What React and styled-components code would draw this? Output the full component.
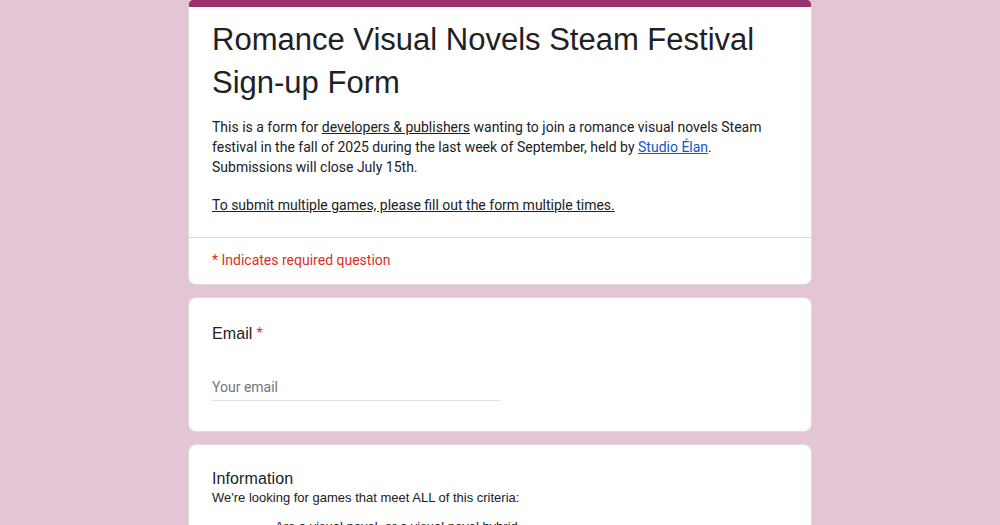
import React from "react";
import styled, { createGlobalStyle } from "styled-components";

const GlobalStyle = createGlobalStyle`
  html, body {
    margin: 0;
    padding: 0;
    background: #e3c5d6;
    height: 525px;
    overflow: hidden;
  }
`;

const Page = styled.div`
  display: flex;
  flex-direction: column;
  align-items: center;
  gap: 12px;
  padding-bottom: 40px;
`;

const Card = styled.div`
  width: 624px;
  box-sizing: border-box;
  background: #fff;
  border: 1px solid #dadce0;
  border-radius: 8px;
  overflow: hidden;
  ${({ $accent }) =>
    $accent &&
    `
    border-top: 8px solid #9b3370;
    margin-top: -1px;
  `}
`;

const HeaderBody = styled.div`
  padding: 11px 23px 22px;
`;

const Title = styled.h1`
  margin: 0 0 13px;
  font-family: "Liberation Sans", Arial, sans-serif;
  font-size: 31px;
  font-weight: 400;
  line-height: 43px;
  color: #202124;
`;

const Description = styled.div`
  font-family: Roboto, "Liberation Sans", sans-serif;
  font-size: 14px;
  line-height: 20px;
  color: #202124;
`;

const Gap = styled.div`
  height: 18px;
`;

const Underlined = styled.span`
  text-decoration: underline;
`;

const Anchor = styled.a`
  color: #1155cc;
  text-decoration: underline;
`;

const Divider = styled.div`
  height: 1px;
  background: #dadce0;
`;

const RequiredNote = styled.div`
  padding: 12px 23px 14px;
  font-family: Roboto, "Liberation Sans", sans-serif;
  font-size: 14px;
  line-height: 20px;
  color: #d93025;
`;

const Question = styled.div`
  padding: ${({ $top }) => $top}px 23px ${({ $bottom }) => $bottom}px;
`;

const QuestionTitle = styled.div`
  font-family: "Liberation Sans", Arial, sans-serif;
  font-size: 16px;
  line-height: 24px;
  color: #202124;
  letter-spacing: 0.1px;
`;

const Star = styled.span`
  color: #d93025;
  margin-left: 4px;
`;

const InputWrap = styled.div`
  width: 50%;
  margin-top: 28px;
  border-bottom: 1px solid #e0e0e0;
`;

const TextInput = styled.input`
  display: block;
  width: 100%;
  box-sizing: border-box;
  border: none;
  outline: none;
  padding: 0;
  height: 26px;
  background: transparent;
  font-family: Roboto, "Liberation Sans", sans-serif;
  font-size: 14px;
  color: #202124;
  &::placeholder {
    color: #70757a;
  }
`;

const SectionText = styled.div`
  margin-top: -1px;
  font-family: "Liberation Sans", Arial, sans-serif;
  font-size: 13px;
  line-height: 16px;
  color: #202124;
`;

const Criteria = styled.ul`
  margin: 12px 0 0;
  padding-left: 63px;
  font-family: "Liberation Sans", Arial, sans-serif;
  font-size: 13px;
  line-height: 18px;
  color: #202124;
`;

export default function App() {
  return (
    <>
      <GlobalStyle />
      <Page>
        <Card $accent>
          <HeaderBody>
            <Title>Romance Visual Novels Steam Festival Sign-up Form</Title>
            <Description>
              This is a form for <Underlined>developers &amp; publishers</Underlined>{" "}
              wanting to join a romance visual novels Steam festival in the fall of
              2025 during the last week of September, held by{" "}
              <Anchor href="#">Studio Élan</Anchor>. Submissions will close July 15th.
              <Gap />
              <Underlined>To submit multiple games, please fill out the form multiple times.</Underlined>
            </Description>
          </HeaderBody>
          <Divider />
          <RequiredNote>* Indicates required question</RequiredNote>
        </Card>

        <Card>
          <Question $top={24} $bottom={30}>
            <QuestionTitle>
              Email<Star>*</Star>
            </QuestionTitle>
            <InputWrap>
              <TextInput type="email" placeholder="Your email" />
            </InputWrap>
          </Question>
        </Card>

        <Card>
          <Question $top={22} $bottom={24}>
            <QuestionTitle>Information</QuestionTitle>
            <SectionText>We're looking for games that meet ALL of this criteria:</SectionText>
            <Criteria>
              <li>Are a visual novel, or a visual novel hybrid</li>
              <li>Have romance as a core part of the story</li>
            </Criteria>
          </Question>
        </Card>
      </Page>
    </>
  );
}
